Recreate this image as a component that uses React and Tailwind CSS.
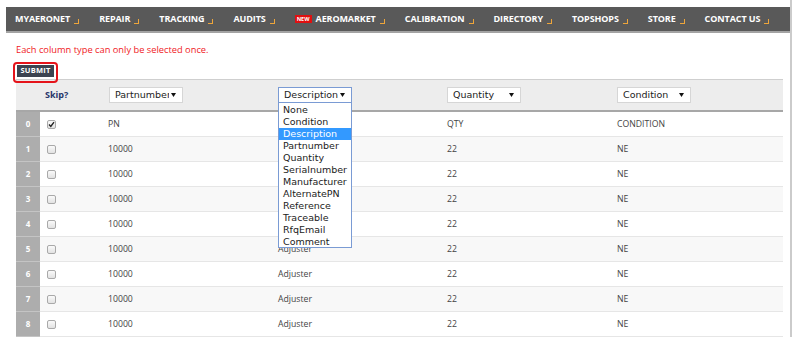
import React from "react";

const navItems = [
  "MYAERONET",
  "REPAIR",
  "TRACKING",
  "AUDITS",
  "AEROMARKET",
  "CALIBRATION",
  "DIRECTORY",
  "TOPSHOPS",
  "STORE",
  "CONTACT US",
];

const options = [
  "None",
  "Condition",
  "Description",
  "Partnumber",
  "Quantity",
  "Serialnumber",
  "Manufacturer",
  "AlternatePN",
  "Reference",
  "Traceable",
  "RfqEmail",
  "Comment",
];

function Marker() {
  return (
    <span className="inline-block w-[5px] h-[5px] border-r-[1.5px] border-b-[1.5px] border-[#eea53a] ml-[4px] mt-[4px]" />
  );
}

function Arrow() {
  return (
    <svg width="5" height="4" viewBox="0 0 5 4" className="absolute right-[6px] top-[5px]">
      <path d="M0 0 L5 0 L2.5 4 Z" fill="#111" />
    </svg>
  );
}

function Select({ label, focused, children }) {
  return (
    <div
      className={
        "relative w-[74px] h-[16px] bg-white flex items-center pl-[5px] border " +
        (focused ? "border-[#7a9bd4]" : "border-[#d6d6d6]")
      }
    >
      <span className="font-['DejaVu_Sans',sans-serif] text-[9.5px] leading-[14px] text-[#222] whitespace-nowrap overflow-hidden w-[54px]">
        {label}
      </span>
      <Arrow />
      {children}
    </div>
  );
}

function Checkbox({ checked }) {
  return (
    <span className="w-[9px] h-[9px] rounded-[2px] border border-[#a9a9a9] bg-gradient-to-b from-[#fafafa] to-[#e2e2e2] flex items-center justify-center">
      {checked && (
        <svg width="7" height="7" viewBox="0 0 7 7">
          <path d="M1 3.6 L2.8 5.4 L6 1.2" stroke="#222" strokeWidth="1.4" fill="none" />
        </svg>
      )}
    </span>
  );
}

const rows = [
  ["PN", "", "QTY", "CONDITION"],
  ["10000", "", "22", "NE"],
  ["10000", "", "22", "NE"],
  ["10000", "", "22", "NE"],
  ["10000", "", "22", "NE"],
  ["10000", "Adjuster", "22", "NE"],
  ["10000", "Adjuster", "22", "NE"],
  ["10000", "Adjuster", "22", "NE"],
  ["10000", "Adjuster", "22", "NE"],
];

export default function App() {
  return (
    <div className="relative w-[800px] h-[349px] bg-white overflow-hidden">
      <div className="ml-[6px] w-[786px] h-[337px] border-r-2 border-[#cbcbcb] pt-[7px]">
        {/* nav */}
        <div className="h-[26px] bg-[#595959] border-b-2 border-[#a3a3a3] flex items-center pl-[9px] gap-[20px] font-['Open_Sans',sans-serif] font-bold text-[9px] text-white tracking-[-0.1px]">
          {navItems.map((n) => (
            <div key={n} className="flex items-center">
              {n === "AEROMARKET" && (
                <span className="bg-[#e01010] text-white text-[5.5px] leading-[8px] h-[8px] px-[2px] mr-[4px] font-bold tracking-[0px]">
                  NEW
                </span>
              )}
              <span className="leading-[12px]">{n}</span>
              <Marker />
            </div>
          ))}
        </div>

        <div className="pl-[10px] mt-[11px] h-[12px] leading-[12px] font-['Open_Sans',sans-serif] text-[9.3px] text-[#f0201e]">
          Each column type can only be selected once.
        </div>

        <div className="ml-[11px] mt-[9px] w-[37px] h-[12px] bg-[#3c4350] flex items-center justify-center font-['Open_Sans',sans-serif] font-bold text-[7.5px] text-white tracking-[0.2px]">
          SUBMIT
        </div>

        {/* table */}
        <div className="ml-[10px] mt-[2px] w-[767px] font-['Open_Sans',sans-serif] text-[8.7px] text-[#444]">
          <div className="grid grid-cols-[24px_68px_170px_169px_170px_166px] h-[33px] bg-[#ededed] border-t border-[#cfcfcf] border-b-2 border-b-[#a7a7a7] items-center">
            <div />
            <div className="pl-[5px] font-bold text-[9px] text-[#27356a]">Skip?</div>
            <div className="pl-[1px]">
              <Select label="Partnumber" />
            </div>
            <div>
              <Select label="Description" focused>
                <div className="absolute left-[-1px] top-[14px] w-[74px] h-[146px] bg-white border border-[#7a9bd4] z-10 py-px">
                  {options.map((o) => (
                    <div
                      key={o}
                      className={
                        "h-[12px] leading-[12px] pl-[4px] font-['DejaVu_Sans',sans-serif] text-[9.5px] whitespace-nowrap " +
                        (o === "Description" ? "bg-[#3399ff] text-white" : "text-[#222]")
                      }
                    >
                      {o}
                    </div>
                  ))}
                </div>
              </Select>
            </div>
            <div>
              <Select label="Quantity" />
            </div>
            <div>
              <Select label="Condition" />
            </div>
          </div>

          {rows.map((r, i) => (
            <div
              key={i}
              className={
                "grid grid-cols-[24px_68px_170px_169px_170px_166px] h-[25px] items-stretch border-b border-[#e6e6e6] " +
                (i % 2 === 1 ? "bg-[#f8f8f8]" : "bg-white")
              }
            >
              <div className="bg-[#adadad] border-b border-[#c4c4c4] -mb-px flex items-center justify-center text-white font-bold text-[8px]">
                {i}
              </div>
              <div className="pl-[7px] flex items-center">
                <Checkbox checked={i === 0} />
              </div>
              <div className="flex items-center pt-[1px]">{r[0]}</div>
              <div className="flex items-center pt-[1px]">{r[1]}</div>
              <div className="flex items-center pt-[1px]">{r[2]}</div>
              <div className="flex items-center pt-[1px]">{r[3]}</div>
            </div>
          ))}
        </div>
      </div>

      {/* annotation box */}
      <div className="absolute left-[13px] top-[62px] w-[45px] h-[21px] border-[2.5px] border-[#e5141b] rounded-[4px]" />
    </div>
  );
}
